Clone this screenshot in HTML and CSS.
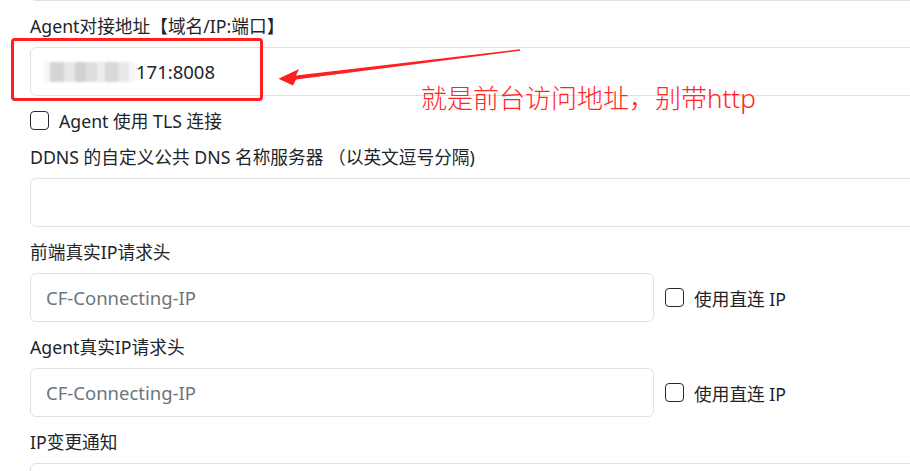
FILE: index.html
```html
<!DOCTYPE html>
<html lang="zh-CN">
<head>
<meta charset="utf-8">
<title>设置</title>
<link rel="stylesheet" href="styles.css">
</head>
<body>
<div class="form">
  <div class="field field-top">
    <div class="input input-full"></div>
  </div>

  <div class="field">
    <label class="label">Agent对接地址【域名/IP:端口】</label>
    <div class="mark-wrap">
      <div class="input input-full"><span class="mosaic"></span><span class="value">171:8008</span></div>
      <div class="red-box"></div>
    </div>
  </div>

  <div class="check-row">
    <span class="checkbox"></span><span class="check-text">Agent 使用 TLS 连接</span>
  </div>

  <div class="field">
    <label class="label">DDNS 的自定义公共 DNS 名称服务器 （以英文逗号分隔)</label>
    <div class="input input-full"></div>
  </div>

  <div class="field">
    <label class="label">前端真实IP请求头</label>
    <div class="inline-row">
      <div class="input input-half"><span class="placeholder">CF-Connecting-IP</span></div>
      <div class="inline-check"><span class="checkbox"></span><span class="check-text">使用直连 IP</span></div>
    </div>
  </div>

  <div class="field">
    <label class="label">Agent真实IP请求头</label>
    <div class="inline-row">
      <div class="input input-half"><span class="placeholder">CF-Connecting-IP</span></div>
      <div class="inline-check"><span class="checkbox"></span><span class="check-text">使用直连 IP</span></div>
    </div>
  </div>

  <div class="field">
    <label class="label">IP变更通知</label>
    <div class="input input-full"></div>
  </div>
</div>

<svg class="arrow" width="910" height="471" viewBox="0 0 910 471" xmlns="http://www.w3.org/2000/svg">
  <polygon fill="#ff1f1f" points="520,49.3 520,50.7 296,79.5 293,85.5 278.5,78.8 299,69 296,75.5"/>
</svg>
<div class="note">就是前台访问地址，别带http</div>
</body>
</html>
```
FILE: styles.css
```css
html, body {
  margin: 0;
  padding: 0;
  overflow: hidden;
  background: #ffffff;
}
body {
  width: 910px;
  height: 471px;
  position: relative;
  font-family: "Noto Sans", "Noto Sans CJK SC", sans-serif;
  font-size: 17.7px;
  color: #212529;
}
.form {
  width: 1100px;
  padding-left: 30px;
  display: flex;
  flex-direction: column;
}
.field {
  display: flex;
  flex-direction: column;
  margin-bottom: 13px;
}
.field-top {
  margin-top: -48px;
}
.label {
  display: block;
  height: 24px;
  line-height: 24px;
  margin-bottom: 9px;
  white-space: nowrap;
}
.input {
  box-sizing: border-box;
  height: 49px;
  border: 1px solid #dfe1e4;
  border-radius: 6px;
  background: #fff;
  display: flex;
  align-items: center;
  padding-left: 15px;
  font-size: 18.5px;
}
.input-full { width: 1000px; }
.input-half { width: 624px; }
.placeholder { color: #6c757d; }
.value { color: #212529; }
.mark-wrap { position: relative; }
.mosaic {
  display: inline-block;
  width: 92px;
  height: 20px;
  margin-left: -2px;
  margin-right: 0;
  background:
    linear-gradient(90deg,
      #f6f6f6 0 6%, #d3d3d3 6% 22%, #e6e6e6 22% 34%, #cfcfcf 34% 46%,
      #dcdcdc 46% 58%, #ececec 58% 66%, #d6d6d6 66% 80%, #e8e8e8 80% 92%, #f6f6f6 92% 100%);
  filter: blur(1.2px);
  opacity: 0.95;
}
.red-box {
  position: absolute;
  left: -19px;
  top: -9px;
  width: 252px;
  height: 63px;
  box-sizing: border-box;
  border: 3px solid #ff1f1f;
  border-radius: 4px;
}
.check-row {
  display: flex;
  align-items: center;
  height: 22px;
  margin-bottom: 14px;
}
.checkbox {
  box-sizing: border-box;
  width: 19px;
  height: 19px;
  border: 1.5px solid #2a2a2a;
  border-radius: 4px;
  background: #fff;
  flex: none;
}
.check-text {
  margin-left: 10px;
  white-space: nowrap;
}
.inline-row {
  display: flex;
  align-items: center;
}
.inline-check {
  display: flex;
  align-items: center;
  margin-left: 11px;
}
.arrow {
  position: absolute;
  left: 0;
  top: 0;
  pointer-events: none;
}
.note {
  position: absolute;
  left: 421px;
  top: 81px;
  font-size: 26px;
  font-weight: 300;
  line-height: 34px;
  color: #ff2626;
  white-space: nowrap;
}
```
